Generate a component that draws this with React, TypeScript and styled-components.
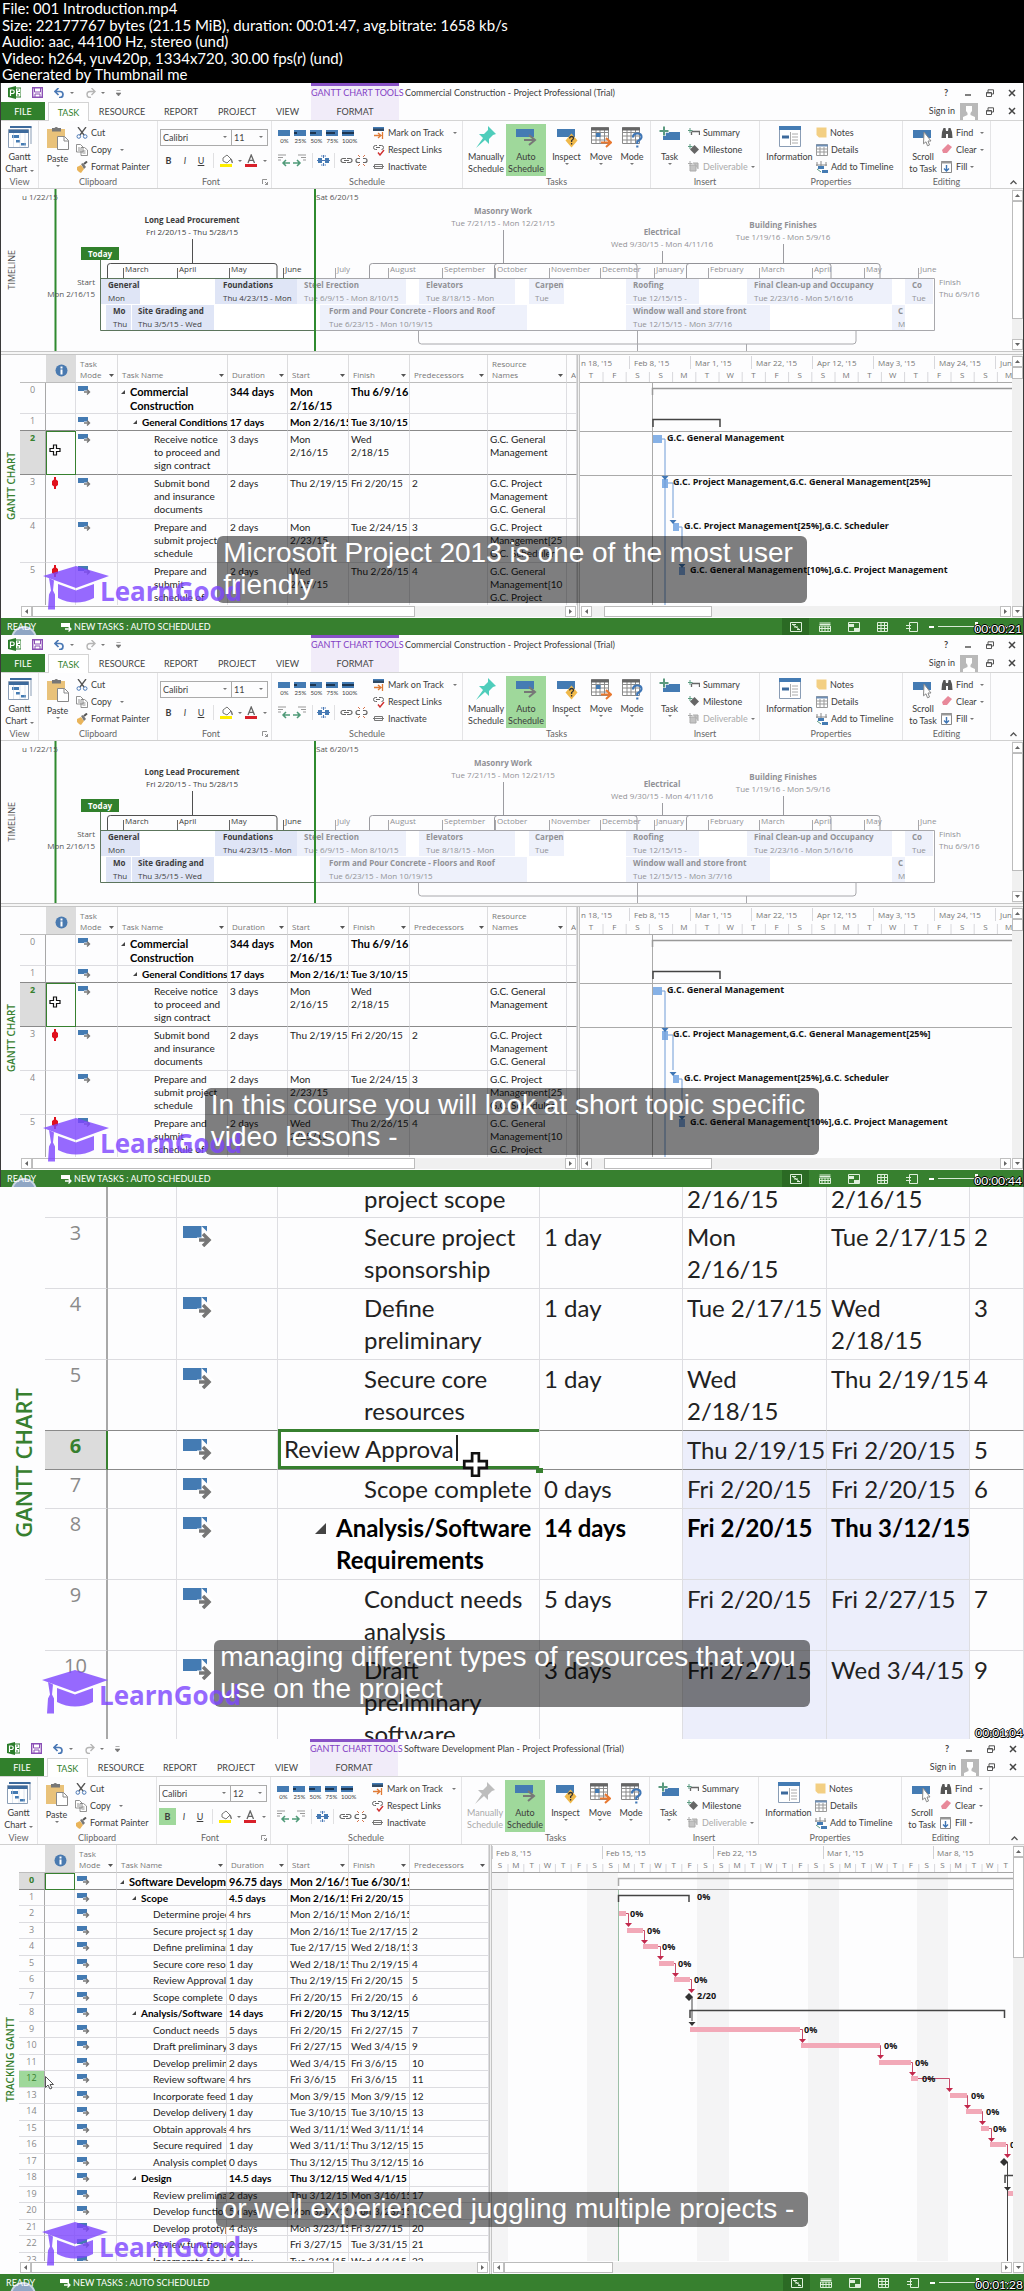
import React from 'react';
import styled, { createGlobalStyle, css } from 'styled-components';

const UI = `"Open Sans", "Noto Sans", sans-serif`;
const GRID = `Lato, "Open Sans", sans-serif`;
const ARIAL = `"Liberation Sans", Arial, sans-serif`;
const GREEN = '#37802f';
const BLUE = '#447bb3';

const Global = createGlobalStyle`
  * { box-sizing: border-box; }
  body { margin: 0; background: #000; font-family: ${UI}; }
  button, input, select { font-family: inherit; font-size: inherit; color: inherit; margin: 0; padding: 0; border: 0; background: none; border-radius: 0; }
  svg { display: block; flex: none; }
`;

/* ---------- sheet header ---------- */

const Sheet = styled.main`
  width: 100%;
  overflow: hidden;
`;
const FileInfo = styled.header`
  display: grid;
  grid-auto-rows: 1fr;
  min-height: 83px;
  padding-left: 2px;
  background: #000;
  color: #fff;
  font: 15px/16px ${GRID};
  white-space: nowrap;
`;

/* ---------- frame ---------- */

const Frame = styled.section<{ $edged?: boolean }>`
  position: relative;
  display: flex;
  flex-direction: column;
  height: 552px;
  overflow: hidden;
  background: #fdfdfe;
  color: #3c3c3c;
  font: 9px/12px ${GRID};
  isolation: isolate;
  ${p => p.$edged && css`border-left: 1px solid #3a3a3a; border-right: 1px solid #3a3a3a;`}
`;
const Caption = styled.p`
  position: absolute;
  top: 453px;
  left: 0;
  right: 0;
  width: fit-content;
  margin: 0 auto;
  padding: 1px 14px 2px 6px;
  color: #fff;
  font: 28px/32px ${ARIAL};
  white-space: pre;
  &::before {
    content: '';
    position: absolute;
    inset: 0;
    z-index: 1;
    border-radius: 6px;
    background: rgba(0, 0, 0, 0.5);
  }
  span { position: relative; z-index: 3; }
`;
const Watermark = styled.div`
  position: absolute;
  z-index: 2;
  left: 42px;
  top: 480px;
  display: flex;
  align-items: center;
  opacity: 0.8;
  color: #7d45ff;
  font: bold 26px/44px ${UI};
  span { margin: 6px 0 0 -9px; }
`;
const Stamp = styled.time`
  position: absolute;
  z-index: 4;
  right: 1px;
  bottom: -1px;
  color: #fff;
  font: 12px/14px ${GRID};
  text-shadow: 1px 0 #000, -1px 0 #000, 0 1px #000, 0 -1px #000, 1px 1px #000;
`;

/* ---------- title bar and tabs ---------- */

const TitleBar = styled.div`
  display: flex;
  align-items: center;
  height: 19px;
`;
const QuickAccess = styled.div`
  display: flex;
  align-items: center;
  width: 310px;
  padding-left: 7px;
  gap: 11px;
  color: #666;
`;
const ToolLabel = styled.div`
  width: 88px;
  height: 19px;
  border-top: 3px solid #8852c6;
  background: #f1ecf9;
  color: #8340c4;
  line-height: 14px;
  text-align: center;
  white-space: nowrap;
`;
const Title = styled.h2`
  margin: 0 auto 0 6px;
  font: 9px/14px ${GRID};
  white-space: nowrap;
`;
const WindowButtons = styled.div`
  display: flex;
  align-items: center;
  padding-right: 6px;
  gap: 12px;
`;
const IconButton = styled.button<{ $on?: boolean; $w?: number }>`
  display: flex;
  align-items: center;
  justify-content: center;
  gap: 5px;
  ${p => p.$w && css`width: ${p.$w}px;`}
  ${p => p.$on && css`background: #9fd89b; align-self: stretch;`}
`;
const Tabs = styled.nav`
  display: flex;
  height: 19px;
  border-bottom: 1px solid #d4d4d4;
`;
const Tab = styled.button<{ $w: number; $kind?: 'file' | 'active' | 'tool' }>`
  width: ${p => p.$w}px;
  height: 18px;
  color: #444;
  text-align: center;
  ${p => p.$kind === 'file' && css`margin-right: 3px; background: #31802c; color: #fff;`}
  ${p => p.$kind === 'active' && css`height: 19px; border: 1px solid #d4d4d4; border-bottom: 0; background: #fff; color: #31802c;`}
  ${p => p.$kind === 'tool' && css`margin-left: 3px; background: #f1ecf9;`}
`;
const SignIn = styled.div`
  display: flex;
  align-items: center;
  gap: 5px;
  margin-left: auto;
  padding-right: 6px;
`;
const SignButtons = styled(WindowButtons)`
  padding: 0 0 0 2px;
`;

/* ---------- ribbon ---------- */

const Ribbon = styled.div`
  display: flex;
  height: 68px;
  border-bottom: 1px solid #d0d0d0;
`;
const Group = styled.section<{ $w: number; $pad?: number }>`
  display: flex;
  flex-direction: column;
  width: ${p => p.$w}px;
  padding: 3px 0 0 ${p => p.$pad || 0}px;
  border-right: 1px solid #e4e4e6;
  h3 {
    margin: auto ${p => p.$pad || 0}px 0 0;
    font: 9px/12px ${GRID};
    color: #666;
    text-align: center;
  }
`;
const GroupBody = styled.div`
  display: flex;
  height: 52px;
`;
const Big = styled.button<{ $w: number; $on?: boolean; $off?: boolean }>`
  display: flex;
  flex-direction: column;
  align-items: center;
  width: ${p => p.$w}px;
  padding-top: 2px;
  line-height: 12px;
  text-align: center;
  white-space: pre;
  ${p => p.$on && css`background: #9fd89b;`}
  ${p => p.$off && css`color: #aaa;`}
  svg { margin-bottom: 3px; }
`;
const List = styled.div`
  display: flex;
  flex-direction: column;
`;
const Small = styled.button<{ $off?: boolean }>`
  display: flex;
  align-items: center;
  gap: 3px;
  height: 17px;
  white-space: nowrap;
  ${p => p.$off && css`color: #aaa;`}
`;
const Caret = styled.i<{ $gap?: number }>`
  display: inline-block;
  width: 0;
  height: 0;
  margin-left: ${p => p.$gap || 0}px;
  border: 2px solid transparent;
  border-top: 2px solid #777;
  border-bottom: 0;
`;
const FontBoxes = styled.div`
  display: flex;
  height: 17px;
  margin: 5px 0 6px;
`;
const Combo = styled.label<{ $w: number }>`
  position: relative;
  width: ${p => p.$w}px;
  margin-right: -1px;
  border: 1px solid #ababab;
  select { width: 100%; height: 15px; padding-left: 2px; appearance: none; color: #444; }
  i { position: absolute; right: 4px; top: 6px; }
`;
const ToolRow = styled.div`
  display: flex;
  align-items: center;
  height: 17px;
`;
const Rule = styled.span`
  width: 1px;
  height: 15px;
  margin: 0 4px;
  background: #e0e0e2;
`;
const ScheduleTools = styled.div`
  display: flex;
  flex-direction: column;
  width: 95px;
  padding-top: 4px;
  gap: 7px;
`;
const Percent = styled.button`
  width: 16px;
  padding-right: 3px;
  font-size: 6px;
  line-height: 7px;
  white-space: nowrap;
`;
const Collapse = styled.button`
  margin: auto 6px 3px auto;
`;

/* ---------- panes ---------- */

const Pane = styled.div<{ $grow?: boolean; $h?: number }>`
  display: flex;
  ${p => (p.$grow ? css`flex: 1; min-height: 0;` : css`height: ${p.$h}px; border-bottom: 1px solid #c6c6c6;`)}
`;
const SideLabel = styled.div<{ $w: number; $size: number; $green?: boolean }>`
  display: flex;
  align-items: center;
  justify-content: center;
  width: ${p => p.$w}px;
  flex: none;
  font-family: ${UI};
  font-size: ${p => p.$size}px;
  line-height: ${p => p.$size + 2}px;
  font-weight: ${p => (p.$green ? 600 : 400)};
  color: ${p => (p.$green ? GREEN : '#555')};
  span { writing-mode: vertical-rl; transform: rotate(180deg); white-space: nowrap; }
`;
const Canvas = styled.svg`
  flex: 1;
  min-width: 0;
  width: 100%;
  height: 100%;
  font-family: ${UI};
  font-size: 8px;
  fill: #555;
`;
const Column = styled.div<{ $w?: number }>`
  display: flex;
  flex-direction: column;
  min-width: 0;
  ${p => (p.$w ? css`flex: 0 0 ${p.$w}px;` : css`flex: 1;`)}
`;
const Clip = styled.div`
  flex: 1;
  min-height: 0;
  overflow: hidden;
`;
const Splitter = styled.div`
  flex: 0 0 3px;
  border: 1px solid #c4c4c4;
  border-width: 0 1px;
  background: #f1f1f1;
`;
const Gap = styled.div`
  height: 3px;
  flex: none;
  border-bottom: 1px solid #c6c6c6;
  background: #f6f6f6;
`;

const Bar = styled.div<{ $v?: boolean }>`
  display: flex;
  flex: none;
  flex-direction: ${p => (p.$v ? 'column' : 'row')};
  background: #f0f0f0;
  ${p => (p.$v ? css`width: 11px; padding: 1px 0;` : css`height: 11px; margin: 1px;`)}
`;
const Arrow = styled.button`
  display: flex;
  align-items: center;
  justify-content: center;
  width: 11px;
  height: 11px;
  flex: none;
  border: 1px solid #c0c0c0;
  background: #fff;
`;
const Thumb = styled.span<{ $v?: boolean; $size: number; $from: number }>`
  border: 1px solid #bcbcbc;
  background: #fff;
  ${p => (p.$v
    ? css`height: ${p.$size}px; margin: ${p.$from}px 0 auto;`
    : css`width: ${p.$size}px; margin: 0 auto 0 ${p.$from}px;`)}
`;
function Scroll({ v, size, from = 0 }: { v?: boolean; size: number; from?: number }) {
  const a = v ? ['M0 4L2.5 1L5 4z', 'M0 1L2.5 4L5 1z'] : ['M4 0L1 2.5L4 5z', 'M1 0L4 2.5L1 5z'];
  return (
    <Bar $v={v}>
      <Arrow aria-label={v ? 'Scroll up' : 'Scroll left'}><svg width="5" height="5"><path d={a[0]} fill="#666" /></svg></Arrow>
      <Thumb $v={v} $size={size} $from={from} />
      <Arrow aria-label={v ? 'Scroll down' : 'Scroll right'}><svg width="5" height="5"><path d={a[1]} fill="#666" /></svg></Arrow>
    </Bar>
  );
}

/* ---------- status bar ---------- */

const Status = styled.footer`
  position: relative;
  display: flex;
  align-items: center;
  height: 17px;
  flex: none;
  padding-left: 6px;
  background: ${GREEN};
  color: #fff;
  &::before {
    content: '';
    position: absolute;
    left: 10px;
    bottom: -17px;
    width: 22px;
    height: 22px;
    border: 2px solid #c8d4e4;
    border-radius: 50%;
    background: #8fa6c4;
  }
`;
const Ready = styled.span`
  position: relative;
`;
const Mode = styled.span`
  display: flex;
  align-items: center;
  gap: 2px;
  margin-left: 25px;
`;
const Views = styled.div`
  display: flex;
  align-self: stretch;
  margin-left: auto;
  gap: 2px;
`;
const View = styled.button<{ $on?: boolean }>`
  display: flex;
  align-items: center;
  justify-content: center;
  width: 27px;
  background: ${p => (p.$on ? '#2b6a24' : 'none')};
`;
const Zoom = styled.label`
  display: flex;
  align-items: center;
  gap: 4px;
  width: 98px;
  padding: 0 8px 0 4px;
  input {
    flex: 1;
    min-width: 0;
    height: 9px;
    appearance: none;
    background: linear-gradient(#d8ead6, #d8ead6) center / 100% 1px no-repeat;
  }
  input::-webkit-slider-thumb { appearance: none; width: 3px; height: 9px; background: #fff; }
`;

/* ---------- task table ---------- */

const Table = styled.table<{ $big?: boolean }>`
  width: 100%;
  table-layout: fixed;
  border-collapse: separate;
  border-spacing: 0;
  color: #222;
  font-family: ${GRID};
  font-size: ${p => (p.$big ? 24 : 10)}px;
  line-height: ${p => (p.$big ? 32 : 13)}px;
  thead th {
    height: 28px;
    padding: 0 3px 2px 4px;
    border-right: 1px solid #dcdcde;
    border-bottom: 1px solid #bdbdbd;
    color: #777;
    font: 8px/11px ${UI};
    text-align: left;
    vertical-align: bottom;
    overflow: hidden;
    white-space: pre;
  }
  thead th:first-child { border-right: 0; }
`;
const HeadLine = styled.span`
  display: flex;
  justify-content: space-between;
  align-items: flex-end;
  svg { margin-bottom: 2px; }
`;
const InfoHead = styled.th`
  && { background: #dcdcdc; vertical-align: middle; padding: 4px 0 0 9px; }
`;
const Row = styled.tr<{ $h: number; $bold?: boolean; $top?: boolean; $dark?: boolean; $big?: boolean; $tight?: boolean }>`
  td, th {
    height: ${p => p.$h}px;
    padding: ${p => (p.$tight ? '0 0 0 4px' : p.$big ? '3px 0 0 4px' : '2px 0 0 2px')};
    overflow: hidden;
    border-right: 1px solid #dedee2;
    border-bottom: 1px solid ${p => (p.$dark ? '#8a8a8a' : '#dcdce0')};
    vertical-align: top;
    text-align: left;
    white-space: pre;
    font-weight: ${p => (p.$bold ? 'bold' : 'normal')};
    ${p => p.$tight && css`line-height: 24px;`}
    ${p => p.$bold && css`color: #000;`}
    ${p => p.$top && css`font-size: 11px; line-height: 14px;`}
  }
`;
const Num = styled.th<{ $big?: boolean; $mark?: 'sel' | 'hover' }>`
  && {
    padding: 0;
    border-right: ${p => (p.$big ? 2 : 1)}px solid ${p => (p.$big && p.$mark ? GREEN : '#a8a8a8')};
    color: ${p => (p.$mark ? GREEN : '#8a8a8a')};
    font-family: ${UI};
    font-size: ${p => (p.$big ? 20 : 9)}px;
    line-height: ${p => (p.$big ? 30 : 13)}px;
    font-weight: ${p => (p.$mark === 'sel' ? 'bold' : 'normal')};
    text-align: center;
    background: ${p => (p.$mark === 'sel' ? '#dcdcdc' : p.$mark === 'hover' ? '#9fd89b' : 'none')};
  }
`;
const InfoCell = styled.td<{ $sel?: boolean }>`
  ${p => p.$sel && css`outline: 1px solid ${GREEN}; outline-offset: -1px;`}
  svg { margin: 0 0 0 3px; }
`;
const NameCell = styled.td<{ $level: number; $big?: boolean }>`
  && { padding-left: ${p => (p.$big ? 30 + p.$level * 28 : 12 + p.$level * 12)}px; }
`;
const Twisty = styled.span<{ $big?: boolean }>`
  display: inline-block;
  width: 0;
  height: 0;
  margin-left: ${p => (p.$big ? -21 : -9)}px;
  margin-right: ${p => (p.$big ? 10 : 5)}px;
  margin-bottom: ${p => (p.$big ? 3 : 2)}px;
  border-left: ${p => (p.$big ? 11 : 4)}px solid transparent;
  border-bottom: ${p => (p.$big ? 11 : 4)}px solid #444;
`;
const DateCell = styled.td<{ $tint?: boolean }>`
  background: ${p => (p.$tint ? '#eceefb' : 'none')};
`;
const EditCell = styled.td`
  && { padding: 0; overflow: visible; position: relative; }
  &::after {
    content: '';
    position: absolute;
    right: -4px;
    bottom: -4px;
    width: 7px;
    height: 5px;
    background: ${GREEN};
  }
`;
const EditInput = styled.input`
  display: block;
  width: 100%;
  height: 40px;
  margin-top: -2px;
  padding: 0 0 2px 3px;
  border: 3px solid ${GREEN};
  border-right-width: 0;
  background: #fff;
  outline: none;
`;
const TextCaret = styled.span`
  position: absolute;
  left: 178px;
  top: 4px;
  width: 2px;
  height: 26px;
  background: #222;
`;
const Pointer = styled.span<{ $x: number; $y: number }>`
  position: absolute;
  z-index: 1;
  left: ${p => p.$x}px;
  top: ${p => p.$y}px;
`;

/* ---------- icons ---------- */

const calGrid = (
  <g stroke="#8a8a8a" fill="none"><path d="M1.5 1.5h17v16h-17z" fill="#fff" /><path d="M1.5 6.500h17M1.500 10h17M1.500 14h17M6 4v13.500M10 4v13.500M14.500 4v13.500" /><path d="M1 3h18" stroke="#666" strokeWidth="3" /></g>
);
const taskBar = <path d="M1 3h18v8H1z" fill={BLUE} />;

const art: Record<string, [number, number, React.ReactNode]> = {
  project: [13, 13, <><path d="M0 2l8-2v13l-8-2z" fill="#2b7d2b" /><path d="M8 2h5v9H8" fill="#fff" stroke="#2b7d2b" /><path d="M9 4h2M10 6.500h2M9 9h2" stroke="#2b7d2b" /><path d="M2.500 10V4h2a1.500 1.500 0 010 3.500h-2" fill="none" stroke="#fff" strokeWidth="1.200" /></>],
  save: [11, 11, <><path d="M.7.7h9.600v9.600H.7z" fill="#fff" stroke="#8a4fb5" strokeWidth="1.400" /><path d="M2.500 1v4h6V1M3 10V7h5v3" fill="none" stroke="#8a4fb5" /></>],
  undo: [11, 10, <path d="M4.500 0L1 3.500 4.500 7M1 3.500h5a3 3 0 010 6H5" fill="none" stroke="#4a78b5" strokeWidth="1.700" />],
  redo: [11, 10, <path d="M6.500 0L10 3.500 6.500 7M10 3.500H5a3 3 0 000 6h1" fill="none" stroke="#b5b5b5" strokeWidth="1.400" />],
  customize: [5, 6, <path d="M.5.5h4M0 3h5L2.500 6z" stroke="#777" strokeWidth=".6" fill="#777" />],
  min: [10, 8, <path d="M2 6h6" stroke="#555" strokeWidth="1.500" />],
  restore: [10, 8, <path d="M1.500 3.500h5v4h-5zM3 3V.8h5.500V5H7M1.500 4h5" fill="none" stroke="#555" />],
  close: [10, 8, <path d="M2 1l6 6M8 1L2 7" stroke="#444" strokeWidth="1.500" />],
  avatar: [18, 17, <><path d="M0 0h18v17H0z" fill="#b9b9b9" /><path d="M6 3h6v5l-1.500 2v2l4.500 2v3H3v-3l4.500-2v-2L6 8z" fill="#fff" /></>],
  gantt: [24, 22, <><path d="M.5 3.500h20v18H.5z" fill="#fff" stroke="#8a9db5" /><path d="M2 .5h21V18" fill="none" stroke="#8a9db5" /><path d="M1 4h19.500v3H1zM2 0h21.500v2H2z" fill="#3d6a9c" /><path d="M4 9h7v3H4zM8 14h4v2.500H8zM13 17h5v2.500h-5z" fill={BLUE} /><path d="M5.500 7v14M12 7v14M17 7v14" stroke="#c6d3e4" strokeWidth=".6" /></>],
  paste: [22, 24, <><path d="M0 3h18v19H0z" fill="#e9c27a" /><path d="M5 2h2.500a2 2 0 013.500 0H14v3.500H5z" fill="#777" /><path d="M10.500 10.500h7l4 4v9h-11z" fill="#fff" stroke="#888" /><path d="M17 10.500V15h4.500" fill="none" stroke="#888" /></>],
  cut: [12, 12, <><path d="M2 0l6 8M10 0L4 8" stroke="#555" strokeWidth="1.300" /><circle cx="2.800" cy="9.500" r="1.800" fill="none" stroke="#4a78b5" /><circle cx="9.200" cy="9.500" r="1.800" fill="none" stroke="#4a78b5" /></>],
  copy: [12, 12, <path d="M.5.5h4L7 3v5H.5zM5 3.500h3.500l3 2.500v5.500H5zM6.500 7h3M6.500 9h3M2 4h2M2 6h2" fill="#fff" stroke="#777" strokeWidth=".8" />],
  painter: [12, 12, <><path d="M1 6l4-2 3 4-3 4-2-1-2-2z" fill="#e9b45a" /><path d="M5 3l2-1 3 4-2 2z" fill="#777" /><path d="M8 3l3-2.500" stroke="#555" strokeWidth="2" /></>],
  fill: [13, 13, <><path d="M3 4l4-3 4 4-4 4-4-2z" fill="#fff" stroke="#777" /><path d="M11 5l1.500 4" stroke="#777" strokeWidth="1.500" /><path d="M0 10h12v3H0z" fill="#ffee00" /></>],
  color: [13, 13, <><path d="M3 9l3.200-8L9.500 9M4.200 6.300h4" stroke="#666" strokeWidth="1.300" fill="none" /><path d="M0 10h12v3H0z" fill="#d8202a" /></>],
  launch: [6, 6, <path d="M.5 5V.5H5M3 3l2.500 2.500M5.500 3v2.500H3" fill="none" stroke="#777" strokeWidth=".8" />],
  outdent: [13, 13, <><path d="M0 1h8M0 3.500h5M0 6h3" stroke="#999" /><path d="M12 9H5M8 6L5 9l3 3" fill="none" stroke="#4f9a78" strokeWidth="1.500" /></>],
  indent: [13, 13, <><path d="M5 1h8M8 3.500h5M10 6h3" stroke="#999" /><path d="M0 9h7M4 6l3 3-3 3" fill="none" stroke="#4f9a78" strokeWidth="1.500" /></>],
  split: [13, 11, <><path d="M1 3h4v5H1zM8 3h4v5H8z" fill={BLUE} /><path d="M0 5.500h13M6.500 0v3M6.500 8v3M4 1h1.500M7.500 1H9M4 10h1.500M7.500 10H9" stroke="#4a78b5" /></>],
  link: [13, 9, <path d="M6 2.500H3a2 2 0 000 4h3M7 2.500h3a2 2 0 010 4H7M4 4.500h5" fill="none" stroke="#666" strokeWidth="1.200" />],
  unlink: [13, 11, <><path d="M5 3.500H3a2 2 0 000 4h2M8 3.500h2a2 2 0 010 4H8" fill="none" stroke="#666" strokeWidth="1.200" /><path d="M3 0l2 2M10 0L8 2M3 11l2-2M10 11L8 9" stroke="#d8734a" /></>],
  track: [12, 12, <><path d="M0 0h11v4H0z" fill="#2f4a66" /><path d="M0 0h11v1.500H0z" fill={BLUE} /><path d="M1 8.500h6M5 6l3 2.500L5 11M9.500 5v7" fill="none" stroke="#e07b35" strokeWidth="1.300" /></>],
  respect: [12, 12, <><path d="M4 1.500H2.500a1.800 1.800 0 000 4H4M6 1.500h2.500a1.800 1.800 0 010 4M3 3.500h4" fill="none" stroke="#666" /><path d="M5 8.500L7 11l4-5" fill="none" stroke="#d03030" strokeWidth="1.400" /></>],
  inactive: [12, 8, <path d="M1.500 1.500h8v4h-8zM0 3.500h11" fill="none" stroke="#777" />],
  pin: [22, 22, <path d="M13 0l8 8-3 1-4 4 0 5-4-4-9 8 7-10-4-4h5l4-4z" fill="#4fcdbb" />],
  pinOff: [22, 22, <path d="M13 0l8 8-3 1-4 4 0 5-4-4-9 8 7-10-4-4h5l4-4z" fill="#bdbdbd" />],
  auto: [22, 22, <>{taskBar}<path d="M9 14h10M14 9l6 5-6 5" stroke="#777" strokeWidth="2" fill="none" /></>],
  inspect: [22, 22, <>{taskBar}<path d="M15.500 7.500l6 7-6 7-6-7z" fill="#f0b94a" /><path d="M13.700 12.500q0-2 1.900-2t1.900 1.800q0 1-1.900 2.200v1.500M15.600 17v1.500" fill="none" stroke="#333" strokeWidth="1.300" /></>],
  move: [22, 22, <>{calGrid}<path d="M6 7h4.500v4H6z" fill={BLUE} /><path d="M11 16.500h9M16 12l5 4.500-5 4.500" fill="none" stroke="#e87830" strokeWidth="2" /></>],
  mode: [22, 22, <>{calGrid}<path d="M12 11.500q0-4 4.300-4t4.200 3.600q0 2-4.200 4.400v2.500M16.300 19.500v2" fill="none" stroke="#3f76b5" strokeWidth="2.200" /></>],
  task: [22, 22, <><path d="M4 6h17v8H4z" fill={BLUE} /><path d="M5 0v10M0 5h10" stroke="#fff" strokeWidth="3.500" /><path d="M5 0.500v9M.5 5h9" stroke="#5b9a80" strokeWidth="2" /></>],
  summary: [12, 10, <><path d="M3.500 3.500h8V7M3.500 4v3" fill="none" stroke="#666" strokeWidth="1.300" /><path d="M2 0v5M0 2.500h4.500" stroke="#5b9a80" /></>],
  milestone: [12, 11, <><path d="M6.500 1l4.500 4.500-4.500 4.500L2 5.500z" fill="#666" /><path d="M2 0v5M0 2.500h4.500" stroke="#5b9a80" /></>],
  deliver: [12, 11, <><path d="M2 4h6v6H2zM5 2h5v6" fill="#c4c4c4" stroke="#aaa" /><path d="M2 0v5M0 2.500h4.500" stroke="#aaa" /></>],
  info: [22, 22, <><path d="M.5.5h21v20H.5z" fill="#fff" stroke="#8a9db5" /><path d="M0 0h22v4H0z" fill={BLUE} /><path d="M3 11h7" stroke="#3d6a9c" strokeWidth="3" /><path d="M13 8h6M13 11h6M13 14h6M13 17h6M11.500 6v13" stroke="#aaa" /></>],
  notes: [11, 11, <path d="M.5.5h10v10H3L.5 8z" fill="#f3cf83" />],
  details: [12, 12, <><path d="M.5.5h11v11H.5zM1 5h10M1 8h10M4 3v8M8 3v8" fill="#fff" stroke="#999" /><path d="M0 1.500h12" stroke="#6f8fb5" strokeWidth="2" /></>],
  timeline: [12, 12, <><path d="M1 1v4M5 0v5M10 1v4M0 4h11" fill="none" stroke="#888" /><path d="M2 5h6v3H2zM6 9h6v3H6z" fill={BLUE} /><path d="M1 8l4 3" stroke="#5b9a80" /></>],
  scroll: [20, 22, <><path d="M0 4h18v8H0z" fill={BLUE} /><path d="M11 6l7 9-3 0 1.500 4-2 .8-1.500-4-2.500 2z" fill="#fff" stroke="#888" /></>],
  find: [12, 10, <path d="M1 4l1.500-4h2L5 3h2l.5-3h2L11 4l.5 6H7V6H5v4H.5z" fill="#555" />],
  clear: [12, 11, <path d="M1 6l6-6 4 3-5 6H2z" fill="#e8899a" />],
  fillDown: [12, 12, <><path d="M.5.5h10v11H.5z" fill="#fff" stroke="#888" /><path d="M0 1.500h11" stroke="#999" strokeWidth="2" /><path d="M5.500 4v6M3 7.500L5.500 10 8 7.500" fill="none" stroke="#3f76b5" strokeWidth="1.400" /></>],
  up: [7, 5, <path d="M.5 4L3.500 1l3 3" fill="none" stroke="#555" strokeWidth="1.300" />],
  modeRow: [13, 10, <><path d="M0 1h10v5H0z" fill={BLUE} /><path d="M6 7h5" stroke="#fff" strokeWidth="3" /><path d="M6 7h5M9 4.500L11.500 7 9 9.500" stroke="#777" strokeWidth="1.400" fill="none" /></>],
  modeBig: [32, 26, <><path d="M2 5h24v12H2z" fill={BLUE} /><path d="M16 19h8M23 11l8 8-8 7z" stroke="#fff" strokeWidth="5" fill="#fff" /><path d="M18 19h9M22 13l6 6-6 6" stroke="#777" strokeWidth="3.500" fill="none" /></>],
  modeWhite: [11, 10, <><path d="M0 1h9v4H0z" fill="#fff" /><path d="M4 7h6M7.500 4.500L10 7 7.500 9.500" stroke="#fff" strokeWidth="1.300" fill="none" /></>],
  circleInfo: [13, 13, <><circle cx="6.500" cy="6.500" r="6" fill="#4a7ab0" /><path d="M6.500 2.500v2M6.500 5.500v5" stroke="#fff" strokeWidth="2" /></>],
  person: [8, 12, <path d="M3 0h2v2.500L7 4v4L5 9.500V12H3V9.500L1 8V4l2-1.500z" fill="#e0101c" />],
  cap: [66, 44, <><path d="M33 0l33 10-33 12L0 10z" /><path d="M15 18l18 6.500L51 18v14q-18 9-36 0z" /><path d="M6 12l5 2.500-1 10 2 4v15H5l1-15 2-4z" /></>],
  vGantt: [12, 10, <path d="M.5.5h11v9H.5zM2 2.500h4M4 5h4M7 7.500h3M2 2l8 6" fill="none" stroke="#dff0dc" />],
  vUsage: [12, 10, <path d="M.5 1h11M.5 4h11v5.500H.5zM.5 6.500h11M3 4v6M6 4v6M9 4v6M.5 2.500h11" fill="none" stroke="#dff0dc" />],
  vTeam: [12, 10, <><path d="M.5.5h11v9H.5z" fill="none" stroke="#dff0dc" /><path d="M1 2h5v3H1zM6 6h5v3H6z" fill="#dff0dc" /></>],
  vSheet: [12, 10, <path d="M.5.500h10v9H.5zM.5 3.500h10M.5 6.500h10M4 .5v9M7.500.5v9" fill="none" stroke="#dff0dc" />],
  vReport: [12, 10, <path d="M3.500.5h8v9h-8zM0 3.500h5M0 6.500h5" fill="none" stroke="#dff0dc" />],
};
function Icon({ n }: { n: string }) {
  const [w, h, body] = art[n];
  return <svg width={w} height={h} viewBox={`0 0 ${w} ${h}`} fill="currentColor" aria-hidden="true">{body}</svg>;
}
function PlusCursor({ s }: { s: number }) {
  return (
    <svg width={s} height={s} viewBox="0 0 12 12" aria-hidden="true">
      <path d="M4.500 1h3v3.500H11v3H7.500V11h-3V7.500H1v-3h3.500z" fill="#fff" stroke="#111" strokeWidth="1.200" />
    </svg>
  );
}

/* ---------- ribbon pieces ---------- */

const FontFoot = styled.div`
  display: flex;
  align-items: center;
  margin-top: auto;
  padding-right: 3px;
  h3 { flex: 1; margin: 0; }
`;

function SmallItem({ icon, label, caret, off }: { icon: string; label: string; caret?: number; off?: boolean }) {
  return <Small $off={off}><Icon n={icon} />{label}{caret !== undefined && <Caret $gap={caret} />}</Small>;
}

type Version = { title: string; size: string; bold?: boolean; pinned?: boolean };

function AppRibbon({ title, size, bold, pinned }: Version) {
  return (
    <>
      <TitleBar>
        <QuickAccess>
          <Icon n="project" />
          <IconButton aria-label="Save"><Icon n="save" /></IconButton>
          <IconButton aria-label="Undo"><Icon n="undo" /><Caret /></IconButton>
          <IconButton aria-label="Redo"><Icon n="redo" /><Caret /></IconButton>
          <IconButton aria-label="Customize"><Icon n="customize" /></IconButton>
        </QuickAccess>
        <ToolLabel>GANTT CHART TOOLS</ToolLabel>
        <Title>{title} - Project Professional (Trial)</Title>
        <WindowButtons>
          <IconButton aria-label="Help" $w={10}><b>?</b></IconButton>
          <IconButton aria-label="Minimize"><Icon n="min" /></IconButton>
          <IconButton aria-label="Restore"><Icon n="restore" /></IconButton>
          <IconButton aria-label="Close"><Icon n="close" /></IconButton>
        </WindowButtons>
      </TitleBar>
      <Tabs>
        <Tab $w={44} $kind="file">FILE</Tab>
        <Tab $w={41} $kind="active">TASK</Tab>
        <Tab $w={66}>RESOURCE</Tab>
        <Tab $w={52}>REPORT</Tab>
        <Tab $w={60}>PROJECT</Tab>
        <Tab $w={41}>VIEW</Tab>
        <Tab $w={88} $kind="tool">FORMAT</Tab>
        <SignIn>
          <span>Sign in</span>
          <Icon n="avatar" />
          <SignButtons>
            <IconButton aria-label="Restore document"><Icon n="restore" /></IconButton>
            <IconButton aria-label="Close document"><Icon n="close" /></IconButton>
          </SignButtons>
        </SignIn>
      </Tabs>
      <Ribbon>
        <Group $w={38}>
          <GroupBody><Big $w={37}><Icon n="gantt" />Gantt{'\n'}<span>Chart <Caret /></span></Big></GroupBody>
          <h3>View</h3>
        </Group>
        <Group $w={119}>
          <GroupBody>
            <Big $w={37}><Icon n="paste" />Paste<Caret /></Big>
            <List>
              <SmallItem icon="cut" label="Cut" />
              <SmallItem icon="copy" label="Copy" caret={5} />
              <SmallItem icon="painter" label="Format Painter" />
            </List>
          </GroupBody>
          <h3>Clipboard</h3>
        </Group>
        <Group $w={114} $pad={2}>
          <FontBoxes>
            <Combo $w={72}><select aria-label="Font"><option>Calibri</option></select><Caret /></Combo>
            <Combo $w={37}><select aria-label="Font size"><option>{size}</option></select><Caret /></Combo>
          </FontBoxes>
          <ToolRow>
            <IconButton $w={17} $on={bold}><b>B</b></IconButton>
            <IconButton $w={16}><em>I</em></IconButton>
            <IconButton $w={16}><u>U</u></IconButton>
            <Rule />
            <IconButton $w={25} aria-label="Background color"><Icon n="fill" /><Caret /></IconButton>
            <IconButton $w={25} aria-label="Font color"><Icon n="color" /><Caret /></IconButton>
          </ToolRow>
          <FontFoot><h3>Font</h3><Icon n="launch" /></FontFoot>
        </Group>
        <Group $w={191} $pad={6}>
          <GroupBody>
            <ScheduleTools>
              <ToolRow>
                {[0, 25, 50, 75, 100].map(n => (
                  <Percent key={n}>
                    <svg width="13" height="7"><path d="M0 0h12v6H0z" fill={BLUE} /><path d={`M0 2h${n * 0.12}v2H0z`} fill="#1d3550" /></svg>
                    {n}%
                  </Percent>
                ))}
              </ToolRow>
              <ToolRow>
                <IconButton $w={13} aria-label="Outdent"><Icon n="outdent" /></IconButton>
                <IconButton $w={17} aria-label="Indent"><Icon n="indent" /></IconButton>
                <Rule />
                <IconButton $w={13} aria-label="Split task"><Icon n="split" /></IconButton>
                <Rule />
                <IconButton $w={14} aria-label="Link tasks"><Icon n="link" /></IconButton>
                <IconButton $w={17} aria-label="Unlink tasks"><Icon n="unlink" /></IconButton>
              </ToolRow>
            </ScheduleTools>
            <List>
              <SmallItem icon="track" label="Mark on Track" caret={6} />
              <SmallItem icon="respect" label="Respect Links" />
              <SmallItem icon="inactive" label="Inactivate" />
            </List>
          </GroupBody>
          <h3>Schedule</h3>
        </Group>
        <Group $w={188} $pad={3}>
          <GroupBody>
            <Big $w={40} $off={pinned}><Icon n={pinned ? 'pinOff' : 'pin'} />Manually{'\n'}Schedule</Big>
            <Big $w={40} $on><Icon n="auto" />Auto{'\n'}Schedule</Big>
            <Big $w={41}><Icon n="inspect" />Inspect<Caret /></Big>
            <Big $w={28}><Icon n="move" />Move<Caret /></Big>
            <Big $w={34}><Icon n="mode" />Mode<Caret /></Big>
          </GroupBody>
          <h3>Tasks</h3>
        </Group>
        <Group $w={109}>
          <GroupBody>
            <Big $w={37}><Icon n="task" />Task<Caret /></Big>
            <List>
              <SmallItem icon="summary" label="Summary" />
              <SmallItem icon="milestone" label="Milestone" />
              <SmallItem icon="deliver" label="Deliverable" caret={0} off />
            </List>
          </GroupBody>
          <h3>Insert</h3>
        </Group>
        <Group $w={143} $pad={3}>
          <GroupBody>
            <Big $w={53}><Icon n="info" />Information</Big>
            <List>
              <SmallItem icon="notes" label="Notes" />
              <SmallItem icon="details" label="Details" />
              <SmallItem icon="timeline" label="Add to Timeline" />
            </List>
          </GroupBody>
          <h3>Properties</h3>
        </Group>
        <Group $w={88} $pad={2}>
          <GroupBody>
            <Big $w={36}><Icon n="scroll" />Scroll{'\n'}to Task</Big>
            <List>
              <SmallItem icon="find" label="Find" caret={4} />
              <SmallItem icon="clear" label="Clear" caret={0} />
              <SmallItem icon="fillDown" label="Fill" caret={0} />
            </List>
          </GroupBody>
          <h3>Editing</h3>
        </Group>
        <Collapse aria-label="Collapse ribbon"><Icon n="up" /></Collapse>
      </Ribbon>
    </>
  );
}

function StatusBar() {
  return (
    <Status>
      <Ready>READY</Ready>
      <Mode><Icon n="modeWhite" />NEW TASKS : AUTO SCHEDULED</Mode>
      <Views>
        {['vGantt', 'vUsage', 'vTeam', 'vSheet', 'vReport'].map((v, i) => (
          <View key={v} $on={i === 0} aria-label={v.slice(1)}><Icon n={v} /></View>
        ))}
      </Views>
      <Zoom>
        <svg width="5" height="2"><path d="M0 1h5" stroke="#fff" strokeWidth="2" /></svg>
        <input type="range" aria-label="Zoom" defaultValue={50} />
      </Zoom>
    </Status>
  );
}

/* ---------- timeline ---------- */

const segments: [number, number, number, number, string, string][] = [
  [101, 140, 0, 108, 'General', 'Mon'],
  [215, 297, 0, 223, 'Foundations', 'Thu 4/23/15 - Mon'],
  [297, 406, 0, 304, 'Steel Erection', 'Tue 6/9/15 - Mon 8/10/15'],
  [419, 515, 0, 426, 'Elevators', 'Tue 8/18/15 - Mon'],
  [529, 564, 0, 535, 'Carpen', 'Tue'],
  [626, 699, 0, 633, 'Roofing', 'Tue 12/15/15 -'],
  [747, 892, 0, 754, 'Final Clean-up and Occupancy', 'Tue 2/23/16 - Mon 5/16/16'],
  [905, 933, 0, 912, 'Co', 'Tue'],
  [106, 131, 1, 113, 'Mo', 'Thu'],
  [132, 214, 1, 138, 'Site Grading and', 'Thu 3/5/15 - Wed'],
  [320, 527, 1, 329, 'Form and Pour Concrete - Floors and Roof', 'Tue 6/23/15 - Mon 10/19/15'],
  [626, 770, 1, 633, 'Window wall and store front', 'Tue 12/15/15 - Mon 3/7/16'],
  [892, 905, 1, 898, 'C', 'M'],
];
const months: [number, string][] = [
  [123, 'March'], [177, 'April'], [229, 'May'], [283, 'June'], [335, 'July'], [388, 'August'], [442, 'September'], [495, 'October'],
  [549, 'November'], [600, 'December'], [654, 'January'], [708, 'February'], [759, 'March'], [812, 'April'], [864, 'May'], [918, 'June'],
];
const callouts: [number, number, number, number, string, string][] = [
  [192, 222, 107, 277, 'Long Lead Procurement', 'Fri 2/20/15 - Thu 5/28/15'],
  [503, 213, 369, 637, 'Masonry Work', 'Tue 7/21/15 - Mon 12/21/15'],
  [662, 234, 494, 831, 'Electrical', 'Wed 9/30/15 - Mon 4/11/16'],
  [783, 227, 686, 880, 'Building Finishes', 'Tue 1/19/16 - Mon 5/9/16'],
];
const tone = (x: number) => (x > 310 ? '#919196' : '#3c3c3c');

function Timeline() {
  return (
    <Canvas>
      <g transform="translate(-21 -188)">
        <rect x="101" y="278" width="833" height="51" fill="#fff" />
        {segments.map(([a, b, r, x, name, dates]) => (
          <g key={name + a} fill={tone(x + 9)}>
            <rect x={a} y={278 + r * 26} width={b - a} height={25} fill={a > 290 ? '#eef1fb' : '#dfe5f6'} />
            <text x={x} y={287 + r * 26} fontWeight="bold">{name}</text>
            <text x={x} y={300 + r * 26}>{dates}</text>
          </g>
        ))}
        {months.map(([x, m]) => (
          <g key={x} fill={tone(x)}>
            <path d={`M${x + 0.5} 267v10`} stroke={tone(x)} strokeWidth=".8" />
            <text x={x + 2} y="271">{m}</text>
          </g>
        ))}
        {callouts.map(([x, y, a, b, name, dates]) => (
          <g key={name} fill={tone(x)} textAnchor="middle">
            <text x={x} y={y} fontWeight="bold">{name}</text>
            <text x={x} y={y + 12}>{dates}</text>
            <path d={`M${x + 0.5} ${y + 16}V262M${a + 0.5} 277V265q0-2.500 3-2.500H${b - 3}q3 0 3 2.500V277`} fill="none" stroke={tone(x)} strokeWidth=".9" />
          </g>
        ))}
        <path d="M315 277.500H934.500V329.500H315M418.500 330v10q0 3 3 3H853q3 0 3-3V330M637.500 330v22M746.500 343v9" fill="none" stroke="#a8a8ac" />
        <path d="M100.500 259V329.500H315M100.500 277.500H315" fill="none" stroke="#5c755c" />
        <path d="M55.500 188v163M315 188v163" stroke="#2f8a2f" strokeWidth="2" />
        <rect x="81" y="246" width="38" height="13" fill="#31802c" />
        <text x="100" y="256" textAnchor="middle" fontWeight="bold" fill="#fff">Today</text>
        <text x="22" y="199">u 1/22/15</text>
        <g textAnchor="end"><text x="95" y="284">Start</text><text x="95" y="296">Mon 2/16/15</text></g>
        <text x="316" y="199">Sat 6/20/15</text>
        <g fill="#919196"><text x="939" y="284">Finish</text><text x="939" y="296">Thu 6/9/16</text></g>
      </g>
    </Canvas>
  );
}

/* ---------- gantt charts ---------- */

function ConstructionChart() {
  const weeks: [number, string][] = [[581, "n 18, '15"], [634, "Feb 8, '15"], [695, "Mar 1, '15"], [756, "Mar 22, '15"], [817, "Apr 12, '15"], [878, "May 3, '15"], [939, "May 24, '15"], [1000, 'Jun']];
  const labels: [number, number, string][] = [
    [667, 441, 'G.C. General Management'],
    [673, 485, 'G.C. Project Management,G.C. General Management[25%]'],
    [684, 529, 'G.C. Project Management[25%],G.C. Scheduler'],
    [690, 573, 'G.C. General Management[10%],G.C. Project Management'],
  ];
  return (
    <Canvas>
      <g transform="translate(-580 -355)">
        <g fill="#777">
          {weeks.map(([x, t]) => <g key={x}><text x={x} y="366">{t}</text><path d={`M${x - 4.5} 356v13`} stroke="#d8d8dc" /></g>)}
          {[...'TFSSMTWTFSSMTWTFSSM'].map((d, i) => (
            <g key={i}><text x={591 + i * 23.2} y="378" textAnchor="middle">{d}</text><path d={`M${603 + i * 23.2} 372v11`} stroke="#d8d8dc" /></g>
          ))}
        </g>
        <path d="M580 382.500H1024M580 431.500H1024M580 475.500H1024M652.500 383V610" stroke="#aaa" fill="none" />
        <path d="M652.500 395v-6.500H1024" stroke="#999" strokeWidth="1.500" fill="none" />
        <path d="M653 427v-7.500h67V427" stroke="#444" strokeWidth="1.500" fill="none" />
        <g fill="#86b1e6"><path d="M653 435h9v8h-9zM662 479h6v9h-6zM673 523h6v8h-6z" /><path d="M679 567h6v8h-6z" fill="#7fa9e0" /></g>
        <path d="M662 439h3V610M668 483h5v35M679 527h3v35" stroke="#6f9bd6" fill="none" />
        <path d="M661.500 476h7l-3.500 4zM669.500 520h7l-3.500 4zM678.500 564h7l-3.500 4z" fill="#3f76b5" />
        <g fill="#111" fontWeight="bold" fontSize="9">{labels.map(([x, y, t]) => <text key={y} x={x} y={y}>{t}</text>)}</g>
      </g>
    </Canvas>
  );
}

function SoftwareChart() {
  const weeks: [number, string][] = [[496, "Feb 8, '15"], [606, "Feb 15, '15"], [717, "Feb 22, '15"], [827, "Mar 1, '15"], [937, "Mar 8, '15"]];
  const bars: [number, number, number][] = [
    [2, 619, 626], [3, 627, 643], [4, 643, 658], [5, 659, 674], [6, 674, 690], [9, 690, 800], [10, 801, 880],
    [11, 879, 911], [12, 911, 918], [13, 950, 967], [14, 966, 982], [15, 981, 989], [16, 990, 1006],
  ];
  const mid = (r: number) => Math.round(1913 + (r - 2) * 16.5);
  return (
    <Canvas>
      <g transform="translate(-492 -1845)">
        <path d="M492 1873h16v400h-16zM587 1873h31v400h-31zM697 1873h32v400h-32zM808 1873h31v400h-31zM917 1873h31v400h-31z" fill="#f4f4f5" />
        <g fill="#777">
          {weeks.map(([x, t]) => <g key={x}><text x={x} y="1856">{t}</text><path d={`M${x - 3.5} 1846v13`} stroke="#d0d0d4" /></g>)}
          {Array.from({ length: 33 }, (_, i) => (
            <g key={i}><text x={500 + i * 15.8} y="1868" textAnchor="middle">{'SMTWTFS'[i % 7]}</text><path d={`M${508 + i * 15.8} 1864v9`} stroke="#d8d8dc" /></g>
          ))}
        </g>
        <path d="M492 1872.500H1024M492 1889.500H1024" stroke="#a5a5a5" />
        <path d="M618.500 1890V2273" stroke="#9dbfa8" />
        <path d="M618.500 1886v-7.500H1024" fill="none" stroke="#aaa" strokeWidth="1.500" />
        <path d="M618.500 1902v-6.500h70.500v6.500M690 2018v-7.500h314.500v7.500M1005 2183v-7.500h20" fill="none" stroke="#444" strokeWidth="1.500" />
        {bars.map(([r, a, b], i) => {
          const y = mid(r);
          const next = r === 6 ? 691 : r === 12 ? 949 : r === 16 ? 1007 : bars[i + 1] ? bars[i + 1][1] + 1 : b;
          return (
            <g key={r}>
              <rect x={a} y={y - 2} width={b - a} height="5" fill="#f2a9b8" />
              <path d={`M${b} ${y + 0.5}H${next + 0.5}V${y + 12}`} fill="none" stroke="#c2385a" strokeWidth=".9" />
              <path d={`M${next - 3} ${y + 10}h7l-3.500 4z`} fill="#c2284c" />
              <text x={r === 12 ? 922 : b + 4} y={y + 4} fontWeight="bold" fontSize="9" fill="#111">0%</text>
            </g>
          );
        })}
        <path d="M1007 2191h20v5h-20z" fill="#f2a9b8" />
        <path d="M692 1997v24M1007.500 2162v110" stroke="#444" />
        <path d="M688.500 2022h7l-3.500 4zM1004 2187h7l-3.500 4zM689 1993l4 4-4 4-4-4zM1004 2158l4 4-4 4-4-4z" fill="#333" />
        <g fill="#111" fontWeight="bold" fontSize="9"><text x="697" y="1900">0%</text><text x="697" y="1999">2/20</text></g>
      </g>
    </Canvas>
  );
}

/* ---------- table data ---------- */

type Task = { n: number | string; name: string; dur: string; start: string; finish: string; pred?: string; res?: string; level: number; h: number; alert?: boolean };

const construction: Task[] = [
  { n: 0, name: 'Commercial\nConstruction', dur: '344 days', start: 'Mon\n2/16/15', finish: 'Thu 6/9/16', level: 0, h: 31 },
  { n: 1, name: 'General Conditions', dur: '17 days', start: 'Mon 2/16/15', finish: 'Tue 3/10/15', level: 1, h: 17 },
  { n: 2, name: 'Receive notice\nto proceed and\nsign contract', dur: '3 days', start: 'Mon\n2/16/15', finish: 'Wed\n2/18/15', res: 'G.C. General\nManagement', level: 2, h: 44 },
  { n: 3, name: 'Submit bond\nand insurance\ndocuments', dur: '2 days', start: 'Thu 2/19/15', finish: 'Fri 2/20/15', pred: '2', res: 'G.C. Project\nManagement\nG.C. General', level: 2, h: 44, alert: true },
  { n: 4, name: 'Prepare and\nsubmit project\nschedule', dur: '2 days', start: 'Mon\n2/23/15', finish: 'Tue 2/24/15', pred: '3', res: 'G.C. Project\nManagement[25\nG.C. Scheduler', level: 2, h: 44 },
  { n: 5, name: 'Prepare and\nsubmit\nschedule of', dur: '2 days', start: 'Wed\n2/25/15', finish: 'Thu 2/26/15', pred: '4', res: 'G.C. General\nManagement[10\nG.C. Project', level: 2, h: 44, alert: true },
];

const planRows: [string, string, string, string, string, number][] = [
  ['Software Development', '96.75 days', 'Mon 2/16/15', 'Tue 6/30/15', '', 0],
  ['Scope', '4.5 days', 'Mon 2/16/15', 'Fri 2/20/15', '', 1],
  ['Determine project', '4 hrs', 'Mon 2/16/15', 'Mon 2/16/15', '', 2],
  ['Secure project sponsorship', '1 day', 'Mon 2/16/15', 'Tue 2/17/15', '2', 2],
  ['Define preliminary', '1 day', 'Tue 2/17/15', 'Wed 2/18/15', '3', 2],
  ['Secure core resources', '1 day', 'Wed 2/18/15', 'Thu 2/19/15', '4', 2],
  ['Review Approval', '1 day', 'Thu 2/19/15', 'Fri 2/20/15', '5', 2],
  ['Scope complete', '0 days', 'Fri 2/20/15', 'Fri 2/20/15', '6', 2],
  ['Analysis/Software', '14 days', 'Fri 2/20/15', 'Thu 3/12/15', '', 1],
  ['Conduct needs', '5 days', 'Fri 2/20/15', 'Fri 2/27/15', '7', 2],
  ['Draft preliminary', '3 days', 'Fri 2/27/15', 'Wed 3/4/15', '9', 2],
  ['Develop preliminary', '2 days', 'Wed 3/4/15', 'Fri 3/6/15', '10', 2],
  ['Review software', '4 hrs', 'Fri 3/6/15', 'Fri 3/6/15', '11', 2],
  ['Incorporate feedback', '1 day', 'Mon 3/9/15', 'Mon 3/9/15', '12', 2],
  ['Develop delivery', '1 day', 'Tue 3/10/15', 'Tue 3/10/15', '13', 2],
  ['Obtain approvals', '4 hrs', 'Wed 3/11/15', 'Wed 3/11/15', '14', 2],
  ['Secure required', '1 day', 'Wed 3/11/15', 'Thu 3/12/15', '15', 2],
  ['Analysis complete', '0 days', 'Thu 3/12/15', 'Thu 3/12/15', '16', 2],
  ['Design', '14.5 days', 'Thu 3/12/15', 'Wed 4/1/15', '', 1],
  ['Review preliminary', '2 days', 'Thu 3/12/15', 'Mon 3/16/15', '17', 2],
  ['Develop functional', '5 days', 'Mon 3/16/15', 'Mon 3/23/15', '19', 2],
  ['Develop prototype', '4 days', 'Mon 3/23/15', 'Fri 3/27/15', '20', 2],
  ['Review functional', '2 days', 'Fri 3/27/15', 'Tue 3/31/15', '21', 2],
  ['Incorporate feedback', '1 day', 'Tue 3/31/15', 'Wed 4/1/15', '22', 2],
];
const plan: Task[] = planRows.map(([name, dur, start, finish, pred, level], n) => ({
  n, name, dur, start, finish, pred, level, h: n % 2 ? 16 : 17,
}));

const zoomed: Task[] = [
  { n: '', name: 'project scope', dur: '', start: '2/16/15', finish: '2/16/15', level: 2, h: 31 },
  { n: 3, name: 'Secure project\nsponsorship', dur: '1 day', start: 'Mon\n2/16/15', finish: 'Tue 2/17/15', pred: '2', level: 2, h: 71 },
  { n: 4, name: 'Define\npreliminary', dur: '1 day', start: 'Tue 2/17/15', finish: 'Wed\n2/18/15', pred: '3', level: 2, h: 71 },
  { n: 5, name: 'Secure core\nresources', dur: '1 day', start: 'Wed\n2/18/15', finish: 'Thu 2/19/15', pred: '4', level: 2, h: 71 },
  { n: 6, name: 'Review Approva', dur: '', start: 'Thu 2/19/15', finish: 'Fri 2/20/15', pred: '5', level: 2, h: 39 },
  { n: 7, name: 'Scope complete', dur: '0 days', start: 'Fri 2/20/15', finish: 'Fri 2/20/15', pred: '6', level: 2, h: 39 },
  { n: 8, name: 'Analysis/Software\nRequirements', dur: '14 days', start: 'Fri 2/20/15', finish: 'Thu 3/12/15', level: 1, h: 71 },
  { n: 9, name: 'Conduct needs\nanalysis', dur: '5 days', start: 'Fri 2/20/15', finish: 'Fri 2/27/15', pred: '7', level: 2, h: 71 },
  { n: 10, name: 'Draft\npreliminary\nsoftware', dur: '3 days', start: 'Fri 2/27/15', finish: 'Wed 3/4/15', pred: '9', level: 2, h: 105 },
];

function Head({ children }: { children: string }) {
  return (
    <th><HeadLine>{children}<svg width="5" height="4"><path d="M0 0h5L2.500 3z" fill="#555" /></svg></HeadLine></th>
  );
}

function TaskTable({ rows, cols, selected, hovered, resources }: { rows: Task[]; cols: number[]; selected: number; hovered?: number; resources?: boolean }) {
  return (
    <Table>
      <colgroup>{cols.map((w, i) => <col key={i} style={{ width: w }} />)}</colgroup>
      <thead>
        <tr>
          <th />
          <InfoHead><Icon n="circleInfo" /></InfoHead>
          <Head>{'Task\nMode'}</Head>
          <Head>Task Name</Head>
          <Head>Duration</Head>
          <Head>Start</Head>
          <Head>Finish</Head>
          <Head>Predecessors</Head>
          {resources && <Head>{'Resource\nNames'}</Head>}
          {resources && <th>A</th>}
        </tr>
      </thead>
      <tbody>
        {rows.map(r => {
          const dark = r.n === selected || r.n === selected - 1;
          return (
            <Row key={r.n} $h={r.h} $bold={r.level < 2} $top={r.level === 0} $dark={dark}>
              <Num scope="row" $mark={r.n === selected ? 'sel' : r.n === hovered ? 'hover' : undefined}>{r.n}</Num>
              <InfoCell $sel={r.n === selected}>{r.alert && <Icon n="person" />}</InfoCell>
              <td><Icon n="modeRow" /></td>
              <NameCell $level={r.level}>{r.level < 2 && <Twisty />}{r.name}</NameCell>
              <td>{r.dur}</td>
              <td>{r.start}</td>
              <td>{r.finish}</td>
              <td>{r.pred}</td>
              {resources && <td>{r.res}</td>}
              {resources && <td />}
            </Row>
          );
        })}
      </tbody>
    </Table>
  );
}

function Logo() {
  return <Watermark><Icon n="cap" /><span>LearnGood</span></Watermark>;
}

function ConstructionFrame({ caption, time }: { caption: string; time: string }) {
  return (
    <Frame $edged>
      <AppRibbon title="Commercial Construction" size="11" />
      <Pane $h={163}>
        <SideLabel $w={20} $size={9}><span>TIMELINE</span></SideLabel>
        <Timeline />
        <Scroll v size={118} />
      </Pane>
      <Gap />
      <Pane $grow>
        <SideLabel $w={19} $size={10} $green><span>GANTT CHART</span></SideLabel>
        <Column $w={557}>
          <Clip><TaskTable rows={construction} cols={[26, 30, 42, 110, 60, 61, 61, 78, 79, 10]} selected={2} resources /></Clip>
          <Scroll size={383} />
        </Column>
        <Splitter />
        <Column>
          <Clip><ConstructionChart /></Clip>
          <Scroll size={108} from={12} />
        </Column>
        <Scroll v size={12} />
      </Pane>
      <StatusBar />
      <Pointer $x={48} $y={361}><PlusCursor s={12} /></Pointer>
      <Caption><span>{caption}</span></Caption>
      <Logo />
      <Stamp>{time}</Stamp>
    </Frame>
  );
}

function ZoomedFrame() {
  return (
    <Frame>
      <Pane $grow>
        <SideLabel $w={45} $size={22} $green><span>GANTT CHART</span></SideLabel>
        <Clip>
          <Table $big>
            <colgroup>{[63, 69, 101, 262, 143, 144, 143].map((w, i) => <col key={i} style={{ width: w }} />)}<col /></colgroup>
            <tbody>
              {zoomed.map((r, i) => (
                <Row key={i} $big $tight={i === 0} $h={r.h} $bold={r.level < 2} $dark={r.n === 5 || r.n === 6}>
                  <Num $big scope="row" $mark={r.n === 6 ? 'sel' : undefined}>{r.n}</Num>
                  <td />
                  <td>{r.n !== '' && <Icon n="modeBig" />}</td>
                  {r.n === 6
                    ? <EditCell><EditInput aria-label="Task name" defaultValue={r.name} /><TextCaret /></EditCell>
                    : <NameCell $big $level={r.level}>{r.level < 2 && <Twisty $big />}{r.name}</NameCell>}
                  <td>{r.dur}</td>
                  <DateCell $tint={i > 3}>{r.start}</DateCell>
                  <DateCell $tint={i > 3}>{r.finish}</DateCell>
                  <td>{r.pred}</td>
                </Row>
              ))}
            </tbody>
          </Table>
        </Clip>
      </Pane>
      <Pointer $x={462} $y={264}><PlusCursor s={27} /></Pointer>
      <Caption><span>{'managing different types of resources that you\nuse on the project'}</span></Caption>
      <Logo />
      <Stamp>00:01:04</Stamp>
    </Frame>
  );
}

function SoftwareFrame() {
  return (
    <Frame>
      <AppRibbon title="Software Development Plan" size="12" bold pinned />
      <Pane $grow>
        <SideLabel $w={19} $size={10} $green><span>TRACKING GANTT</span></SideLabel>
        <Column $w={470}>
          <Clip><TaskTable rows={plan} cols={[26, 30, 42, 110, 61, 61, 61, 79]} selected={0} hovered={12} /></Clip>
          <Scroll size={303} />
        </Column>
        <Splitter />
        <Column>
          <Clip><SoftwareChart /></Clip>
          <Scroll size={109} />
        </Column>
        <Scroll v size={101} />
      </Pane>
      <StatusBar />
      <Pointer $x={45} $y={337}>
        <svg width="9" height="14" aria-hidden="true"><path d="M.5.5v11l2.500-2.500 2 4 2-1-2-3.500h3.500z" fill="#fff" stroke="#555" /></svg>
      </Pointer>
      <Caption><span>or well experienced juggling multiple projects -</span></Caption>
      <Logo />
      <Stamp>00:01:28</Stamp>
    </Frame>
  );
}

export default function App() {
  return (
    <>
      <Global />
      <Sheet>
        <FileInfo>
          <span>File: 001 Introduction.mp4</span>
          <span>Size: 22177767 bytes (21.15 MiB), duration: 00:01:47, avg.bitrate: 1658 kb/s</span>
          <span>Audio: aac, 44100 Hz, stereo (und)</span>
          <span>Video: h264, yuv420p, 1334x720, 30.00 fps(r) (und)</span>
          <span>Generated by Thumbnail me</span>
        </FileInfo>
        <ConstructionFrame caption={'Microsoft Project 2013 is one of the most user\nfriendly'} time="00:00:21" />
        <ConstructionFrame caption={'In this course you will look at short topic specific\nvideo lessons -'} time="00:00:44" />
        <ZoomedFrame />
        <SoftwareFrame />
      </Sheet>
    </>
  );
}
